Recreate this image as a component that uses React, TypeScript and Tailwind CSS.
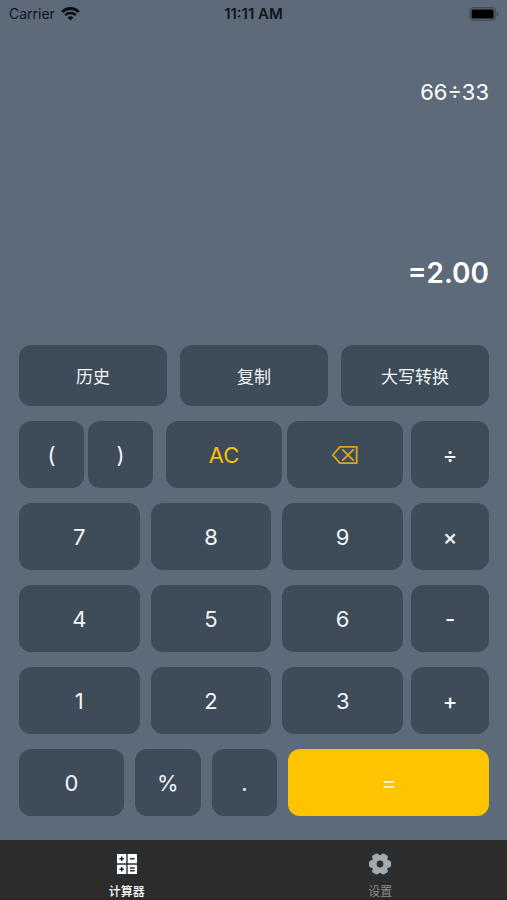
import React from 'react';
import clsx from 'clsx';

interface KeyProps {
  label: string;
  className?: string;
  ariaLabel?: string;
  children?: React.ReactNode;
}

const Key: React.FC<KeyProps> = ({ label, className, ariaLabel, children }) => (
  <button
    type="button"
    aria-label={ariaLabel}
    className={clsx(
      'flex min-w-0 basis-0 items-center justify-center rounded-xl',
      className ?? 'h-[67px] grow bg-[#3e4b58] pt-0.5 text-[22px] text-[#f1f6fa]',
    )}
  >
    {children ?? label}
  </button>
);

const OperatorKey: React.FC<{ label: string; name: string }> = ({ label, name }) => (
  <Key
    label={label}
    ariaLabel={name}
    className="h-[67px] grow-[78] bg-[#3e4b58] pt-0.5 text-[22px] font-medium text-[#f1f6fa]"
  />
);

const DIGIT_ROWS = [
  { digits: ['7', '8', '9'], operator: '×', name: 'multiply' },
  { digits: ['4', '5', '6'], operator: '-', name: 'subtract' },
  { digits: ['1', '2', '3'], operator: '+', name: 'add' },
];

const WifiIcon = () => (
  <svg width="19" height="14" viewBox="0 0 19 14" fill="none" aria-hidden="true">
    <path d="M1.2 4.900a11.800 11.800 0 0 1 16.600 0" stroke="#080c10" strokeWidth="2.800" />
    <path d="M4.200 8.200a7.600 7.600 0 0 1 10.600 0" stroke="#080c10" strokeWidth="2.400" />
    <path d="M9.500 13.600 6.600 10.600a4.200 4.200 0 0 1 5.800 0Z" fill="#080c10" />
  </svg>
);

const BatteryIcon = () => (
  <svg width="30" height="14" viewBox="0 0 30 14" aria-hidden="true">
    <rect x="1" y="0.800" width="25.400" height="12.400" rx="3.500" fill="#5d6a79" stroke="#454e59" strokeWidth="1.600" />
    <rect x="2.600" y="2.500" width="22" height="9" rx="1.500" fill="#000" />
    <path d="M27.800 4.800v4.400c1-.4 1.600-1.200 1.600-2.200S28.800 5.200 27.800 4.800Z" fill="#434c57" />
  </svg>
);

const BackspaceIcon = () => (
  <svg
    width="28"
    height="20"
    viewBox="0 0 28 20"
    fill="none"
    stroke="#dca51a"
    strokeWidth="1.800"
    strokeLinejoin="round"
    strokeLinecap="round"
    aria-hidden="true"
  >
    <path d="M9 1.800h16.700v16.400H9L1.800 10Z" />
    <path d="m11.800 4.800 10.400 10.400M22.200 4.800 11.800 15.200" />
  </svg>
);

const CalculatorIcon = () => (
  <svg width="22" height="22" viewBox="-1 -1 22 22" aria-hidden="true">
    <rect x="-1" y="-1" width="22" height="22" fill="#28323c" />
    <g fill="#fff">
      <rect width="9.300" height="9.300" rx="0.600" />
      <rect x="10.700" width="9.300" height="9.300" rx="0.600" />
      <rect y="10.700" width="9.300" height="9.300" rx="0.600" />
      <rect x="10.700" y="10.700" width="9.300" height="9.300" rx="0.600" />
    </g>
    <g stroke="#25303b" strokeWidth="1.600">
      <path d="M2.400 4.700h4.600M4.700 2.400v4.600M13 4.700h4.700" />
      <path d="M2.400 15.300h4.600M4.700 13v4.600M13 14h4.700M13 16.800h4.700" />
    </g>
  </svg>
);

const GearIcon = () => (
  <svg width="24" height="24" viewBox="0 0 24 24" aria-hidden="true">
    <rect width="24" height="24" fill="#26303a" />
    <g fill="#a9a9a9">
      <circle cx="12" cy="12" r="8.900" />
      <rect x="8.300" y="1" width="7.400" height="22" rx="2.600" transform="rotate(30 12 12)" />
      <rect x="8.300" y="1" width="7.400" height="22" rx="2.600" transform="rotate(90 12 12)" />
      <rect x="8.300" y="1" width="7.400" height="22" rx="2.600" transform="rotate(150 12 12)" />
    </g>
    <circle cx="12" cy="12" r="3.400" fill="#26303a" />
  </svg>
);

const StatusBar = () => (
  <header className="grid h-7 grid-cols-3 items-center px-2 text-sm text-[#10161c]">
    <div className="flex items-center gap-1.5 pl-px">
      <span>Carrier</span>
      <WifiIcon />
    </div>
    <span className="text-center text-[15px] font-semibold whitespace-nowrap">11:11 AM</span>
    <div className="flex justify-end">
      <BatteryIcon />
    </div>
  </header>
);

const Keypad = () => (
  <div className="flex flex-col gap-[15px] pr-[18px] pb-6 pl-[19px]">
    <div className="flex gap-[13px]">
      {['历史', '复制', '大写转换'].map((label) => (
        <Key
          key={label}
          label={label}
          className="h-[61px] grow bg-[#3e4b58] pt-1 text-[17px] text-[#f1f6fa]"
        />
      ))}
    </div>

    <div className="flex gap-2">
      <div className="flex grow-[384] basis-0 gap-[13px]">
        <div className="flex grow-[134] basis-0 gap-1">
          <Key label="(" />
          <Key label=")" />
        </div>
        <div className="flex grow-[237] basis-0 gap-[5px]">
          <Key label="AC" className="h-[67px] grow bg-[#3e4b58] pt-0.5 text-[22px] text-[#f6bf0c]" />
          <Key label="" ariaLabel="backspace" className="h-[67px] grow bg-[#3e4b58]">
            <BackspaceIcon />
          </Key>
        </div>
      </div>
      <OperatorKey label="÷" name="divide" />
    </div>

    {DIGIT_ROWS.map((row) => (
      <div key={row.operator} className="flex gap-2">
        <div className="flex grow-[384] basis-0 gap-[11px]">
          {row.digits.map((digit) => (
            <Key key={digit} label={digit} />
          ))}
        </div>
        <OperatorKey label={row.operator} name={row.name} />
      </div>
    ))}

    <div className="flex gap-[11px]">
      <Key label="0" className="h-[67px] grow-[105] bg-[#3e4b58] pt-0.5 text-[22px] text-[#f1f6fa]" />
      <Key label="%" className="h-[67px] grow-[66] bg-[#3e4b58] pt-0.5 text-[22px] text-[#f1f6fa]" />
      <Key label="." className="h-[67px] grow-[66] bg-[#3e4b58] pt-0.5 text-[22px] text-[#f1f6fa]" />
      <Key
        label="="
        ariaLabel="equals"
        className="h-[67px] grow-[201] bg-[#ffc400] pt-0.5 text-[22px] font-medium text-[#fff3c4]"
      />
    </div>
  </div>
);

const TabBar = () => (
  <nav className="grid h-[60px] grid-cols-2 border-b-2 border-[#2e2429] bg-[#2c2c2d] text-xs">
    <a href="#calculator" aria-current="page" className="flex flex-col items-center pt-3 text-white">
      <span className="flex h-6 items-center">
        <CalculatorIcon />
      </span>
      <span className="mt-2 leading-4 font-medium">计算器</span>
    </a>
    <a href="#settings" className="flex flex-col items-center pt-3 text-[#8a8a8a]">
      <GearIcon />
      <span className="mt-2 leading-4">设置</span>
    </a>
  </nav>
);

export default function App() {
  return (
    <div className="flex min-h-screen flex-col bg-[#5d6a79] font-['Inter','Noto_Sans_CJK_SC',sans-serif]">
      <StatusBar />
      <main className="flex grow flex-col">
        <section className="flex grow flex-col items-end justify-between pt-12 pr-[18px] pb-[52px] pl-[19px] text-white">
          <p className="text-[22px] leading-8">66÷33</p>
          <p className="text-[28px] leading-10 font-semibold">=2.00</p>
        </section>
        <Keypad />
      </main>
      <TabBar />
    </div>
  );
}
